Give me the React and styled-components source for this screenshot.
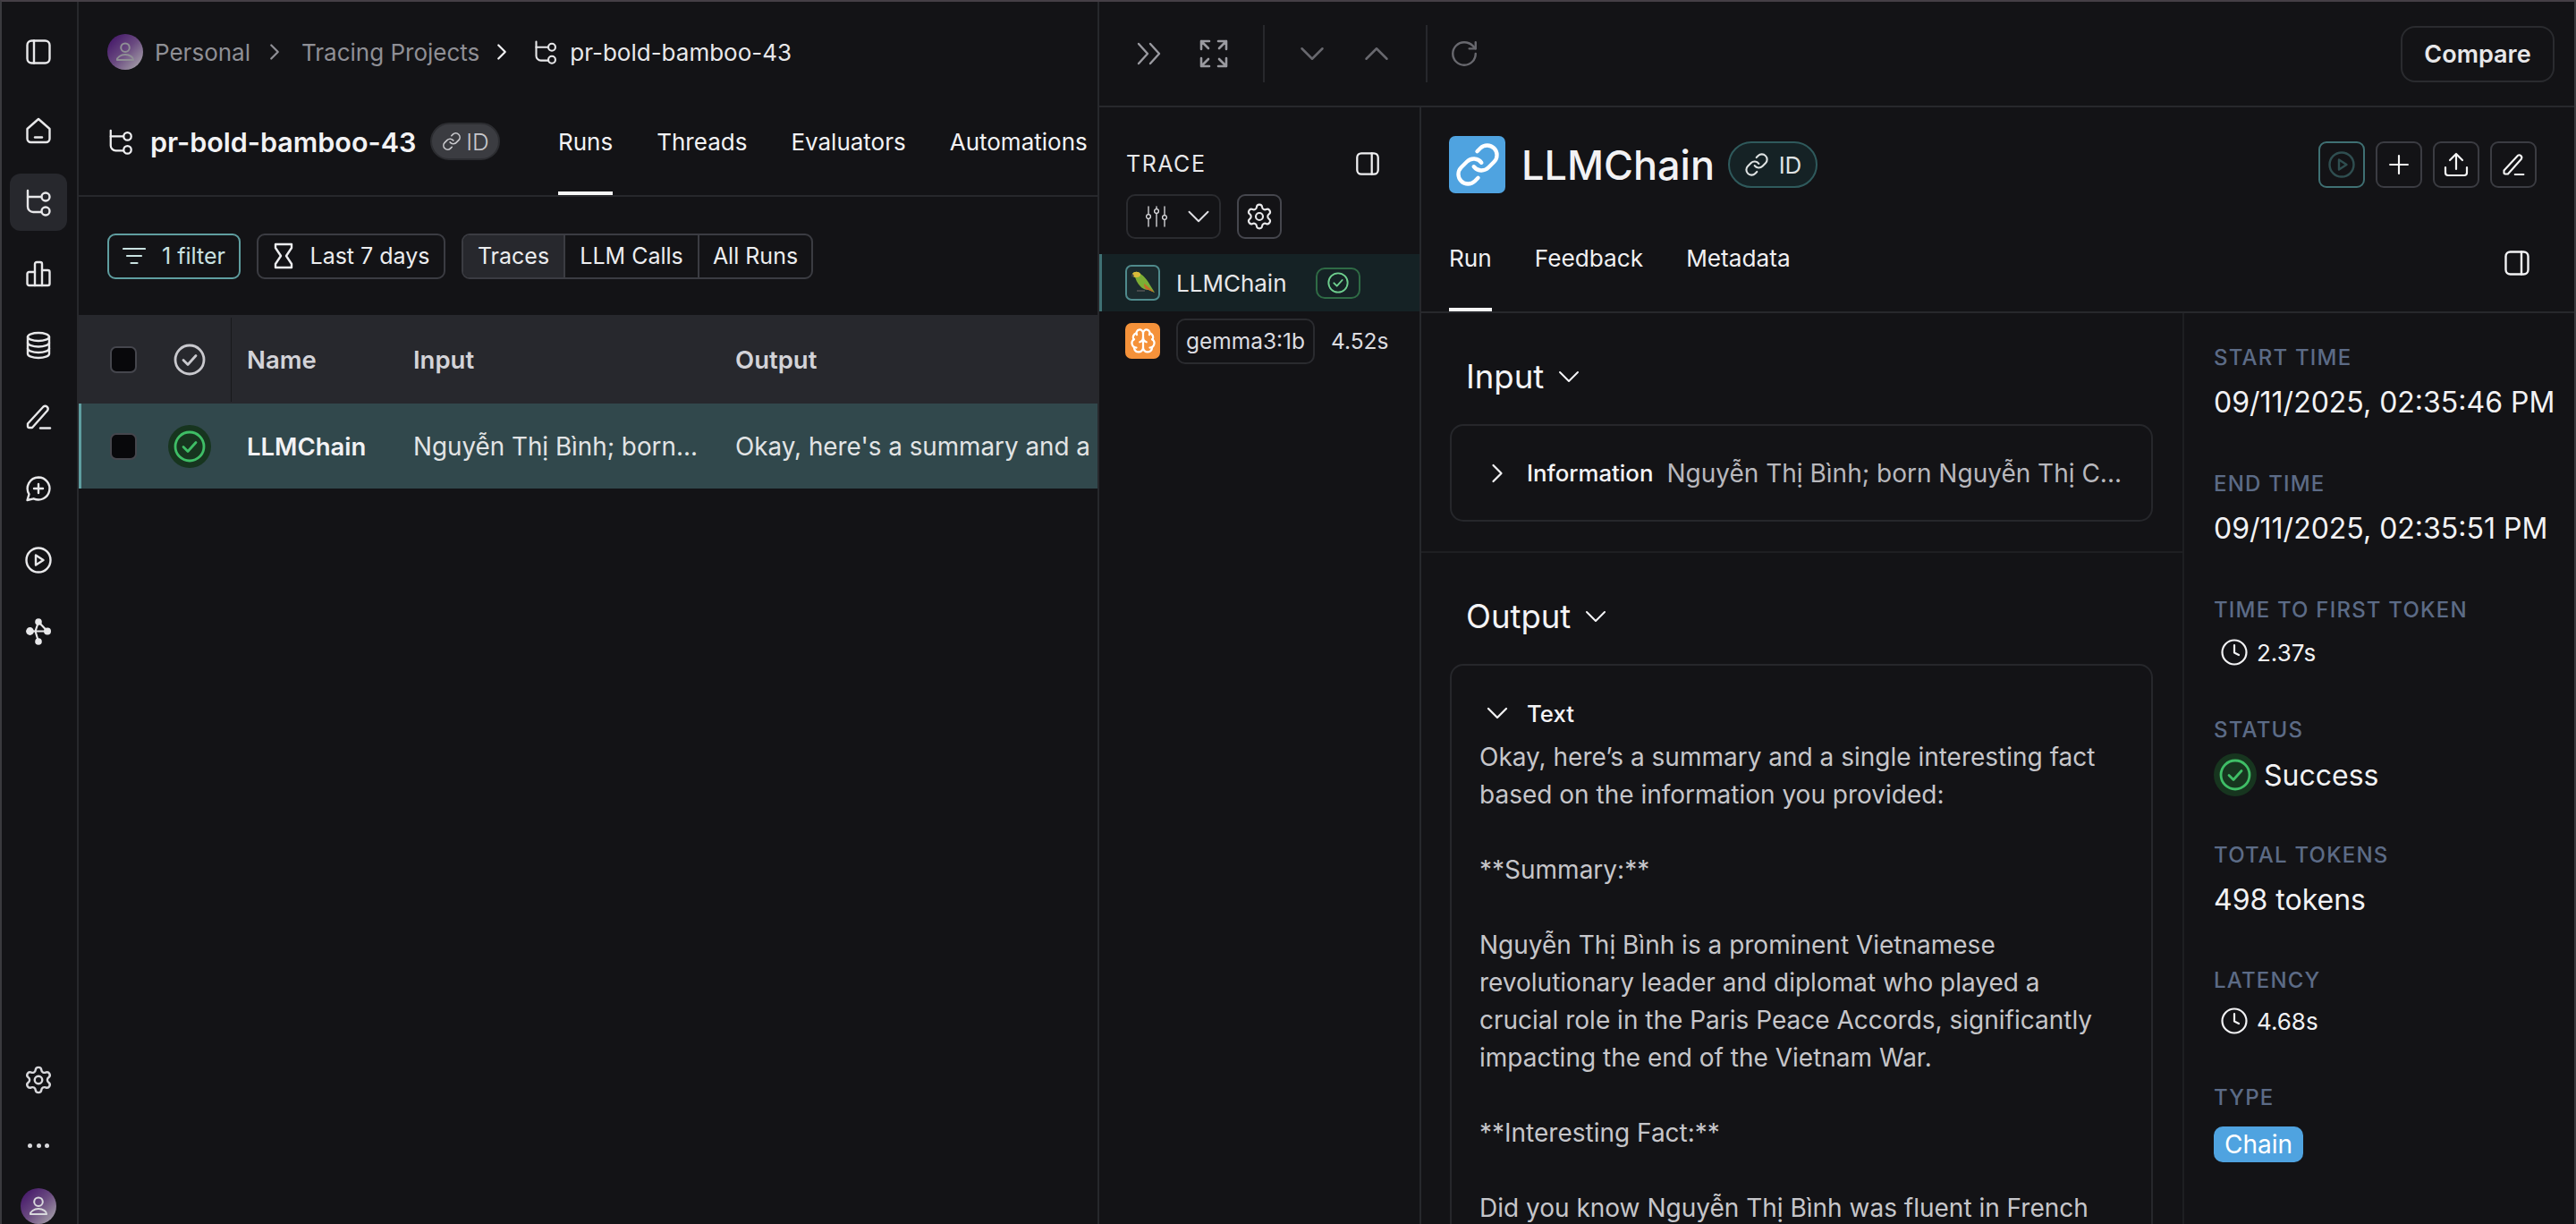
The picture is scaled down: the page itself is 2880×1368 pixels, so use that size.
import React from "react";
import styled, { createGlobalStyle } from "styled-components";
import { Settings, Link as LinkIcon, Brain, ChevronDown, ChevronRight, ChevronUp, RotateCw, Plus } from "lucide-react";

const Global = createGlobalStyle`
  html, body { margin: 0; padding: 0; background: #131316; }
  * { box-sizing: border-box; }
  body { font-family: Inter, "Liberation Sans", sans-serif; color: #f0f0f2; }
`;

const Page = styled.div`
  width: 2880px; height: 1368px; overflow: hidden; display: flex;
  background: #131316;
  border-top: 2px solid #453f46; border-left: 2px solid #3a3a3e; border-right: 2px solid #3a3a3e;
`;
const Sidebar = styled.nav`
  width: 86px; flex: none; border-right: 2px solid #27282c; padding: 24px 2px 0 0;
  display: flex; flex-direction: column; align-items: center;
`;
const SideGroup = styled.div`
  display: flex; flex-direction: column; align-items: center; gap: 16px;
`;
const SideItem = styled.div`
  width: 64px; height: 64px; border-radius: 12px; display: flex; align-items: center; justify-content: center;
  color: #e8e8ea; flex: none;
  background: ${p => (p.$active ? "#27282d" : "transparent")};
  margin-bottom: ${p => p.$mb || 0}px;
`;
const SideFoot = styled.div`
  margin-top: auto; display: flex; flex-direction: column; align-items: center; color: #d8d8dc;
`;
const Dots = styled.div`
  display: flex; gap: 4.5px; margin: 54px 0 45px;
`;
const Dot = styled.span`
  width: 5px; height: 5px; border-radius: 50%; background: #d8d8dc;
`;
const Avatar = styled.div`
  width: 40px; height: 40px; border-radius: 50%; flex: none; display: flex; align-items: center; justify-content: center;
  background: linear-gradient(135deg, #46196a 10%, #6a4a80 50%, #b0b0b0 100%);
`;

const LeftPanel = styled.section`
  width: 1141px; flex: none; border-right: 2px solid #27282c; display: flex; flex-direction: column; overflow: hidden;
`;
const Crumbs = styled.div`
  height: 112px; display: flex; align-items: center; padding-left: 32px; font-size: 26px; color: #8f8f95;
`;
const Crumb = styled.span`
  color: ${p => (p.$current ? "#e8e8ea" : "#8f8f95")};
  margin-left: ${p => p.$ml || 0}px; font-weight: 400; white-space: nowrap;
`;
const CrumbChevron = styled.span`
  display: flex; margin-left: ${p => p.$ml}px; margin-right: ${p => p.$mr}px; color: ${p => (p.$light ? "#f0f0f2" : "#8f8f95")};
`;
const CrumbIcon = styled.span`
  display: flex; color: #e8e8ea;
`;
const TitleRow = styled.div`
  height: 106px; border-bottom: 2px solid #27282c; display: flex; align-items: stretch; padding-left: 32px; flex: none;
`;
const TitleGroup = styled.div`
  display: flex; align-items: center; padding-bottom: 16px; width: 504px; flex: none; color: #f0f0f2;
`;
const Title = styled.h1`
  margin: 0 0 0 18px; font-size: 30.5px; font-weight: 600; white-space: nowrap; color: #f2f2f4;
`;
const GreyPill = styled.span`
  margin-left: 16px; height: 42px; width: 78px; border-radius: 21px; background: #3b3c41; border: 2px solid #2c2d31;
  display: flex; align-items: center; justify-content: center; gap: 5px; font-size: 26px; color: #c8c8cc; font-weight: 300;
`;
const TabsRow = styled.div`
  display: flex; gap: 49px;
`;
const Tab = styled.div`
  display: flex; align-items: center; font-size: 26px; color: #f2f2f4; white-space: nowrap;
  padding-bottom: 12px; border-bottom: 4px solid ${p => (p.$active ? "#f5f5f5" : "transparent")};
`;
const FilterRow = styled.div`
  height: 132px; flex: none; display: flex; align-items: center; padding-left: 32px; gap: 18px;
`;
const FilterBtn = styled.button`
  height: 51px; padding: 0; width: ${p => p.$w}px; border-radius: 9px; background: transparent;
  border: 2px solid ${p => (p.$teal ? "#5f9ea0" : "#3b3c42")}; color: ${p => (p.$teal ? "#c9e2e1" : "#ecedef")};
  font: 400 25px Inter, sans-serif; display: flex; align-items: center; justify-content: center; gap: ${p => p.$gap}px;
`;
const Segmented = styled.div`
  height: 51px; width: 393px; display: grid; grid-template-columns: 112px 150px 1fr; border: 2px solid #3b3c42; border-radius: 9px; overflow: hidden;
`;
const Segment = styled.div`
  display: flex; align-items: center; justify-content: center; font-size: 25px; color: #ecedef;
  background: ${p => (p.$active ? "#27282d" : "transparent")};
  border-left: ${p => (p.$first ? "none" : "2px solid #3b3c42")};
`;
const TableRow = styled.div`
  display: grid; grid-template-columns: 100px 71px 186px 360px 1fr; align-items: center; flex: none;
  height: ${p => p.$h}px; background: ${p => p.$bg};
  box-shadow: ${p => (p.$accent ? "inset 3px 0 0 #5f9ea0" : "none")};
  font-size: 28px; overflow: hidden;
`;
const CheckCell = styled.div`
  display: flex; justify-content: center;
`;
const Checkbox = styled.span`
  width: 30px; height: 30px; border-radius: 7px; background: #08080b; border: 2px solid #45464d; display: block;
`;
const StatusCell = styled.div`
  height: 94px; display: flex; align-items: center; border-right: ${p => (p.$divider ? "1px solid #18191c" : "none")};
`;
const HeadCell = styled.div`
  padding-left: 17px; font-weight: 600; color: #d3d3d8; font-size: 27.5px; white-space: nowrap;
`;
const Cell = styled.div`
  padding-left: 17px; color: ${p => (p.$strong ? "#f2f2f4" : "#e2e4e5")}; font-weight: ${p => (p.$strong ? 600 : 400)};
  font-size: ${p => (p.$strong ? "27.5px" : "27.8px")}; white-space: nowrap; overflow: hidden;
`;

const Right = styled.section`
  flex: 1; display: flex; flex-direction: column; min-width: 0;
`;
const Toolbar = styled.div`
  height: 118px; flex: none; border-bottom: 2px solid #27282c; display: flex; align-items: center; padding: 0 22px 0 42px;
`;
const ToolIcon = styled.span`
  display: flex; color: ${p => p.$c}; margin-left: ${p => p.$ml || 0}px;
`;
const ToolDivider = styled.span`
  width: 2px; height: 64px; background: #27282c; margin-left: ${p => p.$ml}px; flex: none;
`;
const Compare = styled.button`
  margin-left: auto; width: 172px; height: 63px; border-radius: 16px; border: 2px solid #2a2b2f; background: transparent;
  color: #e8e8ea; font: 600 27px Inter, sans-serif; padding: 0;
`;
const Split = styled.div`
  flex: 1; display: flex; min-height: 0;
`;
const Trace = styled.aside`
  width: 360px; flex: none; border-right: 2px solid #27282c; display: flex; flex-direction: column;
`;
const TraceHead = styled.div`
  padding: 49px 0 0 30px; height: 164px; flex: none;
`;
const TraceTitleRow = styled.div`
  display: flex; align-items: center; justify-content: space-between; padding-right: 43px; height: 28px;
`;
const TraceTitle = styled.span`
  font-size: 25px; letter-spacing: 1.5px; color: #e8e8ea;
`;
const TraceControls = styled.div`
  display: flex; gap: 18px; margin-top: 20px;
`;
const Dropdown = styled.div`
  width: 106px; height: 50px; border: 2px solid #2a2b2f; border-radius: 10px; display: flex; align-items: center; padding-left: 20px; gap: 14px; color: #e0e0e4;
  svg { flex: none; }
`;
const GearBtn = styled.div`
  width: 50px; height: 50px; border: 2px solid #45464d; border-radius: 9px; display: flex; align-items: center; justify-content: center; color: #e8e8ea;
`;
const TraceRow = styled.div`
  height: ${p => p.$h}px; flex: none; display: flex; align-items: center; padding-left: 29px;
  background: ${p => (p.$active ? "#152225" : "transparent")};
  box-shadow: ${p => (p.$active ? "inset 3px 0 0 #3f7073" : "none")};
`;
const RunIcon = styled.span`
  width: 39px; height: 40px; flex: none; border-radius: 7px; display: flex; align-items: center; justify-content: center;
  background: ${p => p.$bg}; border: ${p => (p.$border ? `2px solid ${p.$border}` : "none")}; color: #fff;
`;
const RunName = styled.span`
  margin-left: 18px; font-size: 26px; color: #e8e8ea;
`;
const OkBadge = styled.span`
  margin-left: 32px; width: 50px; height: 35px; border-radius: 10px; border: 2px solid #2f6b45; display: flex; align-items: center; justify-content: center;
`;
const ModelPill = styled.span`
  margin-left: 18px; width: 155px; height: 51px; border: 2px solid #2a2b2f; border-radius: 10px; display: flex; align-items: center; justify-content: center; font-size: 24.5px; color: #dcdce0;
`;
const Duration = styled.span`
  margin-left: 18px; font-size: 24.5px; color: #dcdce0;
`;

const Detail = styled.div`
  flex: 1; display: flex; flex-direction: column; min-width: 0;
`;
const DetailTop = styled.div`
  height: 128px; flex: none; padding: 32px 42px 32px 31px; display: flex; align-items: center;
`;
const ChainIcon = styled.span`
  width: 63px; height: 64px; background: #4fa3e0; border-radius: 7px; display: flex; align-items: center; justify-content: center; color: #fff; flex: none;
`;
const DetailTitle = styled.h2`
  margin: 0 0 0 18px; font-size: 45px; font-weight: 500; color: #f2f2f4;
`;
const TealPill = styled.span`
  margin-left: 15px; width: 100px; height: 52px; border-radius: 26px; background: #152225; border: 2px solid #2f5a5c;
  display: flex; align-items: center; justify-content: center; gap: 11px; font-size: 26px; color: #dfe3e3; font-weight: 400;
`;
const Actions = styled.div`
  margin-left: auto; display: flex; gap: 12px;
`;
const ActionBtn = styled.span`
  width: 52px; height: 52px; border-radius: 9px; border: 2px solid ${p => (p.$teal ? "#3f7073" : "#3b3c42")};
  display: flex; align-items: center; justify-content: center; color: ${p => (p.$teal ? "#2f4e50" : "#f5f5f5")};
`;
const DetailTabs = styled.div`
  height: 102px; flex: none; border-bottom: 2px solid #27282c; padding: 0 48px 0 31px; display: flex; align-items: stretch; gap: 48px;
`;
const DetailTab = styled.div`
  display: flex; align-items: center; font-size: 26.2px; color: #f0f0f2; padding-bottom: 16px;
  border-bottom: 4px solid ${p => (p.$active ? "#f5f5f5" : "transparent")};
`;
const PanelToggle = styled.div`
  margin-left: auto; display: flex; align-items: center; margin-bottom: 8px; color: #f2f2f4;
`;
const Body = styled.div`
  flex: 1; display: grid; grid-template-columns: 853px 1fr; min-height: 0;
`;
const Main = styled.div`
  border-right: 2px solid #1e1f22; display: flex; flex-direction: column; overflow: hidden;
`;
const Section = styled.div`
  padding: 48px 33px 33px 32px; flex: none; border-bottom: ${p => (p.$line ? "2px solid #1e1f22" : "none")};
`;
const SectionTitle = styled.div`
  height: 46px; display: flex; align-items: center; padding-left: 18px; font-size: 36.5px; font-weight: 400; gap: 8px; color: #f4f4f6; margin-bottom: ${p => p.$mb}px;
  svg { flex: none; }
`;
const Card = styled.div`
  border: 2px solid #26272b; border-radius: 15px;
`;
const InfoRow = styled.div`
  height: 105px; display: flex; align-items: center; padding-left: 39px; white-space: nowrap;
`;
const KeyChevron = styled.span`
  width: 24px; display: flex; justify-content: center; color: #f0f0f2; flex: none;
  svg { flex: none; }
`;
const KeyName = styled.span`
  margin-left: 21px; font-weight: 500; color: #f4f4f6; font-size: 25.8px;
`;
const KeyValue = styled.span`
  margin-left: 15px; color: #b8b8bd; font-size: 28px;
`;
const TextHead = styled.div`
  display: flex; align-items: center; height: 32px; margin-top: 37px; padding-left: 39px;
`;
const Paragraph = styled.p`
  margin: 12px 0 0 31px; font-size: 28px; line-height: 42px; color: #c6c6ca; white-space: pre-line; height: 620px;
`;
const Meta = styled.div`
  padding: 34px 0 0 33px; display: flex; flex-direction: column;
`;
const MetaItem = styled.div`
  margin-bottom: ${p => p.$mb}px;
`;
const MetaLabel = styled.div`
  height: 32px; line-height: 32px; font-size: 24px; letter-spacing: 1.2px; color: #5c6b86; font-weight: 500; white-space: nowrap;
`;
const MetaValue = styled.div`
  height: 32px; line-height: 32px; margin-top: ${p => p.$mt}px; font-size: 32px; color: #f2f2f4; white-space: nowrap; display: flex; align-items: center;
`;
const Latency = styled.div`
  height: 32px; margin-top: ${p => p.$mt}px; padding-left: 8px; display: flex; align-items: center; gap: 10px; font-size: 26px; color: #f2f2f4;
`;
const StatusValue = styled.div`
  height: 48px; margin-top: 10px; display: flex; align-items: center; gap: 8px; font-size: 32px; color: #f2f2f4;
`;
const TypeChip = styled.span`
  display: flex; align-items: center; justify-content: center; width: 100px; height: 40px; margin-top: 16px; border-radius: 10px; background: #4fa3e0; color: #fff; font-size: 28px;
`;
const SvgBox = styled.svg`
  display: block; flex: none;
`;

const S = ({ s = 32, w, h, vb, sw = 2.4, children }) => (
  <SvgBox width={w || s} height={h || s} viewBox={vb || `0 0 ${w || s} ${h || s}`} fill="none" stroke="currentColor" strokeWidth={sw} strokeLinecap="round" strokeLinejoin="round">
    {children}
  </SvgBox>
);
const PanelLeftIcon = () => <S><rect x="3.5" y="3.5" width="25" height="25" rx="5" /><path d="M11 3.5v25" /></S>;
const PanelRightIcon = ({ s = 32 }) => <S s={s} vb="0 0 32 32"><rect x="3.5" y="3.5" width="25" height="25" rx="5" /><path d="M21 3.5v25" /></S>;
const HomeIcon = () => <S><path d="M3.5 14 16 3l12.5 11v11a4 4 0 0 1-4 4h-17a4 4 0 0 1-4-4z" /><path d="M12 23.5h8" /></S>;
const TreeIcon = ({ s = 32 }) => <S s={s} vb="0 0 32 32"><path d="M4 3v18a6 6 0 0 0 6 6h9" /><path d="M4 10h15" /><circle cx="24" cy="10" r="4.5" /><circle cx="24" cy="26" r="4.5" /></S>;
const ChartIcon = () => <S><path d="M3.5 16a2 2 0 0 1 2-2H12V5a2 2 0 0 1 2-2h4a2 2 0 0 1 2 2v7h6.5a2 2 0 0 1 2 2v13a2 2 0 0 1-2 2h-21a2 2 0 0 1-2-2z" /><path d="M12 14v15M20 12v17" /></S>;
const DbIcon = () => <S><ellipse cx="16" cy="6.5" rx="12" ry="4.5" /><path d="M4 6.5v19c0 2.5 5.4 4.5 12 4.5s12-2 12-4.5v-19" /><path d="M4 13c0 2.5 5.4 4.5 12 4.5S28 15.5 28 13" /><path d="M4 19.5c0 2.5 5.4 4.5 12 4.5s12-2 12-4.5" /></S>;
const PenIcon = ({ s = 32 }) => <S s={s} vb="0 0 32 32"><path d="M4 23.5 21.5 4.5a3.2 3.2 0 0 1 4.6 4.3L9 28H5.5A1.5 1.5 0 0 1 4 26.5z" /><path d="M18 28.5h11" /></S>;
const ChatPlusIcon = () => <S><path d="M16 3.5a12.5 12.5 0 1 1-5.4 23.8L3.5 29l2-6.6A12.5 12.5 0 0 1 16 3.5z" /><path d="M16 11v10M11 16h10" /></S>;
const PlayCircleIcon = ({ s = 32 }) => <S s={s} vb="0 0 32 32"><circle cx="16" cy="16" r="13.5" /><path d="M13 10.5 21.5 16 13 21.5z" /></S>;
const GraphIcon = () => (
  <S sw={2.2}>
    <path d="M16 5l-3.5 10.5L16 27M16 5l10 10.5M7 15.5h19" />
    <g fill="currentColor" stroke="none"><circle cx="16" cy="5" r="3.8" /><circle cx="16" cy="27" r="3.8" /><circle cx="26" cy="15.5" r="4" /><circle cx="6.5" cy="15.5" r="4.4" /></g>
  </S>
);
const PersonIcon = ({ s = 24 }) => <S s={s} sw={2}><circle cx={s / 2} cy={s * 0.3} r={s * 0.2} /><path d={`M${s * 0.12} ${s * 0.88}c0-3 ${s * 0.17}-${s * 0.25} ${s * 0.38}-${s * 0.25}s${s * 0.38} ${s * 0.12} ${s * 0.38} ${s * 0.25}z`} /></S>;
const FilterIcon = () => <S w={26} h={20} sw={2.2}><path d="M1 2h24M5 10h16M9.5 18h7" /></S>;
const HourglassIcon = () => <S w={24} h={30} sw={2.4}><path d="M3 2h18v4l-6 9 6 9v4H3v-4l6-9-6-9z" /></S>;
const CheckCircle = ({ color = "#c9c9ce", s = 36, sw = 2.8 }) => <S s={s} sw={sw} vb="0 0 36 36"><circle cx="18" cy="18" r="16" style={{ stroke: color }} /><path d="m11 18.5 5 5 9-10" style={{ stroke: color }} /></S>;
const Halo = styled.span`
  width: 48px; height: 48px; border-radius: 50%; background: #17351f; display: flex; align-items: center; justify-content: center; flex: none;
`;
const HeadStatus = styled.span`
  width: 48px; display: flex; justify-content: center;
`;
const SlidersIcon = () => <S w={24} h={24} sw={1.3}><path d="M3 1v8M3 15v8M12 1v2M12 9v14M21 1v9M21 16v7" /><circle cx="3" cy="12" r="2.4" /><circle cx="12" cy="6" r="2.4" /><circle cx="21" cy="13" r="2.4" /></S>;
const ClockIcon = () => <S s={30} sw={2.2}><circle cx="15" cy="15" r="13.5" /><path d="M15 7v8.5l5 2.5" /></S>;
const ExpandIcon = () => <S w={34} h={34} sw={2.6}><path d="M3 12V3h9M3 3l8 8M22 3h9v9M31 3l-8 8M3 22v9h9M3 31l8-8M31 22v9h-9M31 31l-8-8" /></S>;
const DoubleChevron = () => <S w={28} h={26} sw={2.4}><path d="M2 2l10 11L2 24M15 2l10 11-10 11" /></S>;
const UploadIcon = () => <S s={30} sw={2.2}><path d="M15 20V3M8 10l7-7 7 7M3 18v6a3 3 0 0 0 3 3h18a3 3 0 0 0 3-3v-6" /></S>;
const ParrotIcon = () => (
  <SvgBox width="32" height="32" viewBox="0 0 32 32">
    <path d="M4 6c2-3 7-3 9 0 5 3 9 9 11 13l5 8-7-3c-3 0-7-1-10-5C9 16 8 12 7 10 5 10 4 8 4 6z" fill="#7cae35" />
    <path d="M4 6c2-3 7-3 9 0 .5 2-1 4-4 4-2 .5-5-1-5-4z" fill="#d9b93a" />
    <path d="M17 17c3 2 6 5 12 10l-7-3c-3 0-5-3-5-7z" fill="#c8692a" />
    <path d="M4 6c-1.5.5-1.5 3 0 4l2-2z" fill="#444" />
    <path d="M9 25h9" stroke="#555" strokeWidth="1.5" />
  </SvgBox>
);

const topItems = [
  [<HomeIcon />, false], [<TreeIcon />, true], [<ChartIcon />, false], [<DbIcon />, false],
  [<PenIcon />, false], [<ChatPlusIcon />, false], [<PlayCircleIcon />, false], [<GraphIcon />, false],
];
const outputText = `Okay, here’s a summary and a single interesting fact
based on the information you provided:

**Summary:**

Nguyễn Thị Bình is a prominent Vietnamese
revolutionary leader and diplomat who played a
crucial role in the Paris Peace Accords, significantly
impacting the end of the Vietnam War.

**Interesting Fact:**

Did you know Nguyễn Thị Bình was fluent in French`;

export default function App() {
  return (
    <Page>
      <Global />
      <Sidebar>
        <SideItem $mb={24}><PanelLeftIcon /></SideItem>
        <SideGroup>
          {topItems.map(([icon, active], i) => <SideItem key={i} $active={active}>{icon}</SideItem>)}
        </SideGroup>
        <SideFoot>
          <Settings size={34} strokeWidth={1.7} />
          <Dots><Dot /><Dot /><Dot /></Dots>
          <Avatar><PersonIcon /></Avatar>
        </SideFoot>
      </Sidebar>

      <LeftPanel>
        <Crumbs>
          <Avatar><PersonIcon /></Avatar>
          <Crumb $ml={13}>Personal</Crumb>
          <CrumbChevron $ml={12} $mr={15}><ChevronRight size={30} strokeWidth={1.8} /></CrumbChevron>
          <Crumb>Tracing Projects</Crumb>
          <CrumbChevron $ml={10} $mr={20} $light><ChevronRight size={30} strokeWidth={1.8} /></CrumbChevron>
          <CrumbIcon><TreeIcon s={28} /></CrumbIcon>
          <Crumb $ml={13} $current>pr-bold-bamboo-43</Crumb>
        </Crumbs>
        <TitleRow>
          <TitleGroup>
            <TreeIcon s={30} />
            <Title>pr-bold-bamboo-43</Title>
            <GreyPill><LinkIcon size={22} strokeWidth={1.8} />ID</GreyPill>
          </TitleGroup>
          <TabsRow>
            <Tab $active>Runs</Tab><Tab>Threads</Tab><Tab>Evaluators</Tab><Tab>Automations</Tab>
          </TabsRow>
        </TitleRow>
        <FilterRow>
          <FilterBtn $teal $w={149} $gap={18}><FilterIcon />1 filter</FilterBtn>
          <FilterBtn $w={211} $gap={18}><HourglassIcon />Last 7 days</FilterBtn>
          <Segmented>
            <Segment $first $active>Traces</Segment><Segment>LLM Calls</Segment><Segment>All Runs</Segment>
          </Segmented>
        </FilterRow>
        <TableRow $h={99} $bg="#27282d">
          <CheckCell><Checkbox /></CheckCell>
          <StatusCell $divider><HeadStatus><CheckCircle /></HeadStatus></StatusCell>
          <HeadCell>Name</HeadCell><HeadCell>Input</HeadCell><HeadCell>Output</HeadCell>
        </TableRow>
        <TableRow $h={95} $bg="#31484c" $accent>
          <CheckCell><Checkbox /></CheckCell>
          <StatusCell><Halo><CheckCircle color="#3fbe66" /></Halo></StatusCell>
          <Cell $strong>LLMChain</Cell>
          <Cell>Nguyễn Thị Bình; born...</Cell>
          <Cell>Okay, here's a summary and a</Cell>
        </TableRow>
      </LeftPanel>

      <Right>
        <Toolbar>
          <ToolIcon $c="#9a9aa0"><DoubleChevron /></ToolIcon>
          <ToolIcon $c="#9a9aa0" $ml={41}><ExpandIcon /></ToolIcon>
          <ToolDivider $ml={38} />
          <ToolIcon $c="#68686e" $ml={30}><ChevronDown size={46} strokeWidth={1.3} /></ToolIcon>
          <ToolIcon $c="#68686e" $ml={26}><ChevronUp size={46} strokeWidth={1.3} /></ToolIcon>
          <ToolDivider $ml={32} />
          <ToolIcon $c="#68686e" $ml={24}><RotateCw size={34} strokeWidth={1.7} /></ToolIcon>
          <Compare>Compare</Compare>
        </Toolbar>
        <Split>
          <Trace>
            <TraceHead>
              <TraceTitleRow>
                <TraceTitle>TRACE</TraceTitle>
                <PanelRightIcon s={30} />
              </TraceTitleRow>
              <TraceControls>
                <Dropdown><SlidersIcon /><ChevronDown size={42} strokeWidth={1.1} /></Dropdown>
                <GearBtn><Settings size={32} strokeWidth={1.6} /></GearBtn>
              </TraceControls>
            </TraceHead>
            <TraceRow $active $h={64}>
              <RunIcon $bg="#1b2b2e" $border="#4f8a8c"><ParrotIcon /></RunIcon>
              <RunName>LLMChain</RunName>
              <OkBadge><CheckCircle color="#6fd08f" s={24} sw={2.8} /></OkBadge>
            </TraceRow>
            <TraceRow $h={66}>
              <RunIcon $bg="#f5923a"><Brain size={30} strokeWidth={1.8} /></RunIcon>
              <ModelPill>gemma3:1b</ModelPill>
              <Duration>4.52s</Duration>
            </TraceRow>
          </Trace>

          <Detail>
            <DetailTop>
              <ChainIcon><LinkIcon size={52} strokeWidth={2} /></ChainIcon>
              <DetailTitle>LLMChain</DetailTitle>
              <TealPill><LinkIcon size={28} strokeWidth={1.8} />ID</TealPill>
              <Actions>
                <ActionBtn $teal><PlayCircleIcon s={32} /></ActionBtn>
                <ActionBtn><Plus size={34} strokeWidth={1.5} /></ActionBtn>
                <ActionBtn><UploadIcon /></ActionBtn>
                <ActionBtn><PenIcon s={28} /></ActionBtn>
              </Actions>
            </DetailTop>
            <DetailTabs>
              <DetailTab $active>Run</DetailTab><DetailTab>Feedback</DetailTab><DetailTab>Metadata</DetailTab>
              <PanelToggle><PanelRightIcon s={32} /></PanelToggle>
            </DetailTabs>
            <Body>
              <Main>
                <Section $line>
                  <SectionTitle $mb={30}>Input<ChevronDown size={40} strokeWidth={1.2} /></SectionTitle>
                  <Card>
                    <InfoRow>
                      <KeyChevron><ChevronRight size={36} strokeWidth={1.5} /></KeyChevron>
                      <KeyName>Information</KeyName>
                      <KeyValue>Nguyễn Thị Bình; born Nguyễn Thị C...</KeyValue>
                    </InfoRow>
                  </Card>
                </Section>
                <Section>
                  <SectionTitle $mb={30}>Output<ChevronDown size={40} strokeWidth={1.2} /></SectionTitle>
                  <Card>
                    <TextHead>
                      <KeyChevron><ChevronDown size={40} strokeWidth={1.4} /></KeyChevron>
                      <KeyName>Text</KeyName>
                    </TextHead>
                    <Paragraph>{outputText}</Paragraph>
                  </Card>
                </Section>
              </Main>
              <Meta>
                <MetaItem $mb={59}><MetaLabel>START TIME</MetaLabel><MetaValue $mt={18}>09/11/2025, 02:35:46 PM</MetaValue></MetaItem>
                <MetaItem $mb={59}><MetaLabel>END TIME</MetaLabel><MetaValue $mt={18}>09/11/2025, 02:35:51 PM</MetaValue></MetaItem>
                <MetaItem $mb={55}><MetaLabel>TIME TO FIRST TOKEN</MetaLabel><Latency $mt={15}><ClockIcon />2.37s</Latency></MetaItem>
                <MetaItem $mb={50}><MetaLabel>STATUS</MetaLabel><StatusValue><Halo><CheckCircle color="#3fbe66" /></Halo>Success</StatusValue></MetaItem>
                <MetaItem $mb={58}><MetaLabel>TOTAL TOKENS</MetaLabel><MetaValue $mt={18}>498 tokens</MetaValue></MetaItem>
                <MetaItem $mb={54}><MetaLabel>LATENCY</MetaLabel><Latency $mt={13}><ClockIcon />4.68s</Latency></MetaItem>
                <MetaItem $mb={0}><MetaLabel>TYPE</MetaLabel><TypeChip>Chain</TypeChip></MetaItem>
              </Meta>
            </Body>
          </Detail>
        </Split>
      </Right>
    </Page>
  );
}
